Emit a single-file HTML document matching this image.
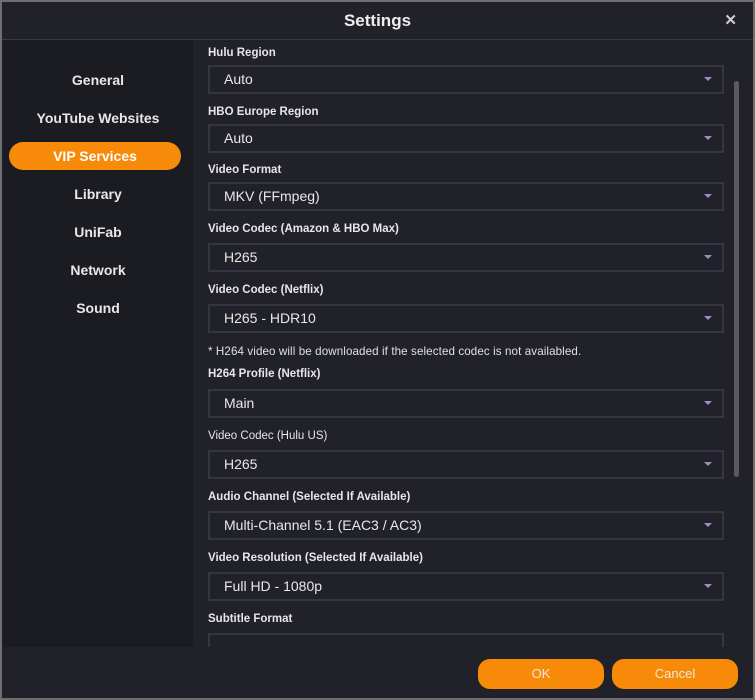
<!DOCTYPE html>
<html><head><meta charset="utf-8"><style>
*{margin:0;padding:0;box-sizing:border-box}
body{width:755px;height:700px;background:#6f6f72;font-family:"Liberation Sans",Arial,sans-serif;position:relative;overflow:hidden}
#win{position:absolute;left:2px;top:2px;width:751px;height:696px;background:#21212a;overflow:hidden}
.title{position:absolute;left:0;top:0;width:751px;height:38px;text-align:center;line-height:38px;color:#eee;font-weight:bold;font-size:17px}
.close{position:absolute;right:16px;top:9px;color:#d0d0d0;font-size:15px;font-weight:bold}
.hline{position:absolute;left:0;top:37px;width:751px;height:1px;background:#3a3a46}
.side{position:absolute;left:1px;top:38px;width:190px;height:607px;background:#1b1b22}
.nav{position:absolute;left:0;width:190px;text-align:center;color:#e8e8e8;font-weight:bold;font-size:14px}
.act{position:absolute;left:6px;top:102px;width:172px;height:28px;border-radius:14px;background:#f78a08;color:#fff;text-align:center;line-height:28px;font-weight:bold;font-size:14px}
.content{position:absolute;left:191px;top:38px;width:560px;height:607px;overflow:hidden}
.lbl{position:absolute;left:15px;color:#e6e6e6;font-weight:bold;font-size:11.5px}
.lbl.n{font-weight:normal}
.dd{position:absolute;left:15px;width:516px;height:29px;border:2px solid #363642;color:#e8e8e8;font-size:14px;line-height:25px;padding-left:14px}
.dd:after{content:"";position:absolute;right:10px;top:10px;border-left:4px solid transparent;border-right:4px solid transparent;border-top:4px solid #9a90c0}
.dd.x:after{display:none}
.note{position:absolute;left:15px;top:305px;color:#e0e0e0;font-size:11.6px;letter-spacing:0.1px}
.sb{position:absolute;left:732px;top:79px;width:5px;height:396px;background:#5a5a60;border-radius:3px}
.btn{position:absolute;top:657px;height:30px;width:126px;border-radius:12px;background:#f78a08;text-align:center;line-height:30px;font-size:13px;color:#f5e6d8}
</style></head><body><div id="win">
<div class="title">Settings</div><div class="close">✕</div><div class="hline"></div>
<div class="side">
<div class="nav" style="top:32px">General</div>
<div class="nav" style="top:70px">YouTube Websites</div>
<div class="act">VIP Services</div>
<div class="nav" style="top:146px">Library</div>
<div class="nav" style="top:184px">UniFab</div>
<div class="nav" style="top:222px">Network</div>
<div class="nav" style="top:260px">Sound</div>
</div>
<div class="content">
<div class="lbl" style="top:7px">Hulu Region</div><div class="dd" style="top:25px">Auto</div>
<div class="lbl" style="top:66px">HBO Europe Region</div><div class="dd" style="top:84px">Auto</div>
<div class="lbl" style="top:124px">Video Format</div><div class="dd" style="top:142px">MKV (FFmpeg)</div>
<div class="lbl" style="top:183px">Video Codec (Amazon &amp; HBO Max)</div><div class="dd" style="top:203px">H265</div>
<div class="lbl" style="top:244px">Video Codec (Netflix)</div><div class="dd" style="top:264px">H265 - HDR10</div>
<div class="note">* H264 video will be downloaded if the selected codec is not availabled.</div>
<div class="lbl" style="top:328px">H264 Profile (Netflix)</div><div class="dd" style="top:349px">Main</div>
<div class="lbl n" style="top:390px">Video Codec (Hulu US)</div><div class="dd" style="top:410px">H265</div>
<div class="lbl" style="top:451px">Audio Channel (Selected If Available)</div><div class="dd" style="top:471px">Multi-Channel 5.1 (EAC3 / AC3)</div>
<div class="lbl" style="top:512px">Video Resolution (Selected If Available)</div><div class="dd" style="top:532px">Full HD - 1080p</div>
<div class="lbl" style="top:573px">Subtitle Format</div><div class="dd x" style="top:593px"></div>
</div>
<div class="sb"></div>
<div class="btn" style="left:476px">OK</div>
<div class="btn" style="left:610px">Cancel</div>
</div></body></html>
